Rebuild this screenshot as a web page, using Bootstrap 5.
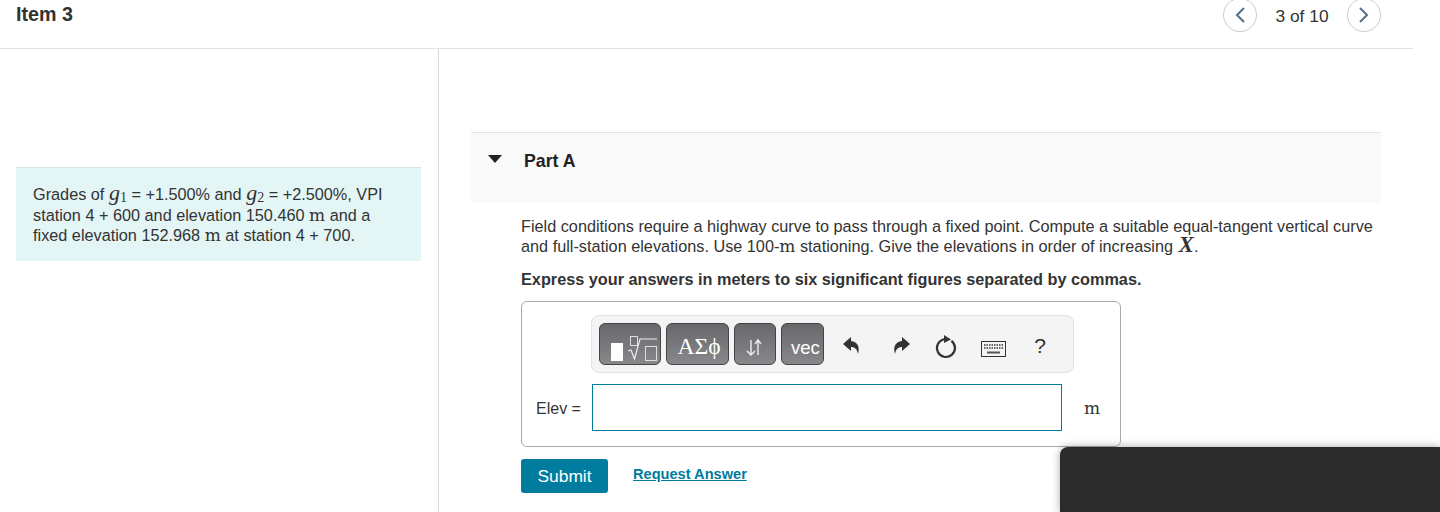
<!DOCTYPE html>
<html lang="en">
<head>
<meta charset="utf-8">
<title>Item 3</title>
<link href="https://cdn.jsdelivr.net/npm/bootstrap@5.3.0/dist/css/bootstrap.min.css" rel="stylesheet">
<style>
html,body{height:512px;overflow:hidden;background:#fff}
body{font-family:"Liberation Sans",Arial,sans-serif;font-size:16.25px;line-height:20px;color:#333}
.sheet{width:1413px}
.top-bar{height:49px;border-bottom:1px solid #e2e2e2;padding:0 32px 0 16px}
.item-title{font-size:19.7px;font-weight:700;line-height:28px;margin:0;color:#333}
.round-nav{width:34px;height:34px;margin-top:-2px;border:1px solid #ccc;border-radius:50%;background:#fff;padding:0;display:flex;align-items:center;justify-content:center}
.pager-text{width:90px;text-align:center;line-height:32px;font-size:17.4px}
.left-pane{width:439px;height:463px;border-right:1px solid #cfdde3;padding:118px 17px 0 16px;flex:none}
.stim{background:#e4f5f6;border-top:1px solid #d6e4e5;padding:16px 30px 16px 17px;height:94px}
.right-pane{padding:83px 32px 0;flex:1;min-width:0}
.part-head{height:71px;background:#f9f9f9;border-top:1px solid #e2e2e2;padding:18px 0 0 17px;gap:22px}
.tri{width:0;height:0;border-style:solid;border-width:8px 7px 0;border-color:#222 transparent transparent;margin-top:-1px}
.part-title{font-size:17.7px;font-weight:700;margin:0;color:#222;line-height:20px}
.part-body{padding:13px 0 0 50px}
.part-body p{margin:0}
.ask{margin-top:13px!important;font-weight:700}
.mx{font-family:"DejaVu Serif","Liberation Serif",serif;font-size:17px}
.mi{font-family:"Liberation Serif",serif;font-style:italic;font-size:23px;font-weight:700;line-height:0;padding-left:1px}
.gi{font-family:"Liberation Serif",serif;font-style:italic;font-size:22px;line-height:0}
.gi sub{font-style:normal;font-size:14px;bottom:-.15em;line-height:16.5px}
.answer-box{width:600px;height:146px;margin-top:12px;border:1px solid #aaa;border-radius:6px;padding:13px 14px 0}
.tool-strip{width:483px;height:58px;margin-left:55px;background:#f4f4f4;border:1px solid #e2e2e2;border-radius:8px;padding:7px 0 0 7px}
.tool-key{height:42px;border:1px solid #444;border-radius:6px;background:linear-gradient(#68686c,#88888c);color:#fff;padding:0;display:flex;align-items:center;justify-content:center;margin-right:5px}
.k1{width:62px}.k2{width:63px;font-family:"Liberation Serif",serif;font-size:23.5px;padding:3px 0 0 3px}.k3{width:42px}.k4{width:43px;font-size:18.5px;margin-right:0;padding:7px 0 0 9px;justify-content:flex-start;white-space:nowrap}
.tool-ico{background:none;border:0;padding:4px 0 0;display:flex;align-items:center;justify-content:center;height:42px;color:#333}
.i1{width:56px}.i2{width:42px}.i3{width:48px}.i4{width:46px;padding-top:10px}.i5{width:48px;font-size:21px}
.entry-row{margin-top:11px;height:47px}
.elev{width:56px;flex:none;font-size:16px;padding-top:2px}
.entry{width:470px;height:47px;border:1px solid #007c9e;background:#fff;border-radius:0;padding:0 8px}
.entry:focus{outline:none}
.unit{margin-left:22px;font-family:"DejaVu Serif","Liberation Serif",serif;font-size:17px}
.act-row{margin-top:12px;gap:25px}
.send{width:87px;height:34px;background:#007c9e;border:0;border-radius:3px;color:#fff;font-size:17.4px;padding:0;line-height:34px}
.req{color:#007c9e;font-weight:700;font-size:14.6px;margin-top:-4px}
.dark-panel{position:fixed;left:1060px;top:447px;right:0;bottom:0;background:#2b2b2b;border-radius:8px 0 0 0;box-shadow:0 0 8px rgba(0,0,0,.35)}
</style>
</head>
<body>
<div class="sheet">
  <header class="top-bar d-flex justify-content-between align-items-start">
    <h1 class="item-title">Item 3</h1>
    <nav class="d-flex align-items-start" aria-label="Items">
      <button class="round-nav" aria-label="Previous"><svg width="12" height="18" viewBox="0 0 12 18"><path d="M10 2 3 9l7 7" fill="none" stroke="#52708a" stroke-width="2"/></svg></button>
      <span class="pager-text">3 of 10</span>
      <button class="round-nav" aria-label="Next"><svg width="12" height="18" viewBox="0 0 12 18"><path d="M2 2l7 7-7 7" fill="none" stroke="#52708a" stroke-width="2"/></svg></button>
    </nav>
  </header>
  <main class="d-flex">
    <aside class="left-pane">
      <div class="stim">Grades of <span class="gi">g<sub>1</sub></span> = +1.500% and <span class="gi">g<sub>2</sub></span> = +2.500%, VPI station 4 + 600 and elevation 150.460 <span class="mx">m</span> and a fixed elevation 152.968 <span class="mx">m</span> at station 4 + 700.</div>
    </aside>
    <section class="right-pane">
      <div class="part-head d-flex align-items-start">
        <span class="tri mt-1"></span>
        <h2 class="part-title">Part A</h2>
      </div>
      <div class="part-body">
        <p>Field conditions require a highway curve to pass through a fixed point. Compute a suitable equal-tangent vertical curve and full-station elevations. Use 100-<span class="mx">m</span> stationing. Give the elevations in order of increasing <span class="mi">X</span>.</p>
        <p class="ask">Express your answers in meters to six significant figures separated by commas.</p>
        <div class="answer-box">
          <div class="tool-strip d-flex">
            <button class="tool-key k1" aria-label="Templates"><svg width="60" height="40" viewBox="0 0 60 40"><rect x="11" y="19" width="12" height="18" fill="#fff"/><rect x="30.500" y="12.500" width="7" height="9" fill="none" stroke="#ddd"/><path d="M28 27l3-1 3.500 9 5.500-20h17" fill="none" stroke="#eee" stroke-width="1.2"/><rect x="45.500" y="22.500" width="11" height="14" fill="none" stroke="#ddd"/></svg></button>
            <button class="tool-key k2">ΑΣϕ</button>
            <button class="tool-key k3" aria-label="Subscript and superscript"><svg width="24" height="24" viewBox="0 0 24 24"><path d="M8 6v15M4 17l4 4 4-4M15 21V6M12 10l3-4 3 4" fill="none" stroke="#eee" stroke-width="1.4" transform="translate(0 2)"/></svg></button>
            <button class="tool-key k4">vec</button>
            <button class="tool-ico i1" aria-label="Undo"><svg width="20" height="22" viewBox="0 0 20 22"><path d="M9 2 1 9l8 7v-4c4 0 6 2 7 7 2-7 0-12-7-13z" fill="#333"/></svg></button>
            <button class="tool-ico i2" aria-label="Redo"><svg width="20" height="22" viewBox="0 0 20 22"><path d="M11 2l8 7-8 7v-4c-4 0-6 2-7 7-2-7 0-12 7-13z" fill="#333"/></svg></button>
            <button class="tool-ico i3" aria-label="Reset"><svg width="24" height="26" viewBox="0 0 24 26"><path d="M17.400 7.800A9 9 0 1 1 10 6.200" fill="none" stroke="#333" stroke-width="2.200"/><path d="M10 2l7 4.500L10 10z" fill="#333"/></svg></button>
            <button class="tool-ico i4" aria-label="Keyboard"><svg width="25" height="16" viewBox="0 0 25 16"><rect x=".5" y=".5" width="24" height="15" fill="#f4f4f4" stroke="#333"/><path d="M3 4h19M3 7h19" stroke="#666" stroke-width="2" stroke-dasharray="1.500 1"/><path d="M6 11.500h13" stroke="#555" stroke-width="2"/></svg></button>
            <button class="tool-ico i5">?</button>
          </div>
          <div class="entry-row d-flex align-items-center">
            <label class="elev" for="ans">Elev =</label>
            <input class="entry" id="ans" type="text" aria-label="Elev">
            <span class="unit">m</span>
          </div>
        </div>
        <div class="act-row d-flex align-items-center">
          <button class="send">Submit</button>
          <a class="req" href="#">Request Answer</a>
        </div>
      </div>
    </section>
  </main>
</div>
<div class="dark-panel"></div>
<script src="https://cdn.jsdelivr.net/npm/bootstrap@5.3.0/dist/js/bootstrap.bundle.min.js"></script>
</body>
</html>
